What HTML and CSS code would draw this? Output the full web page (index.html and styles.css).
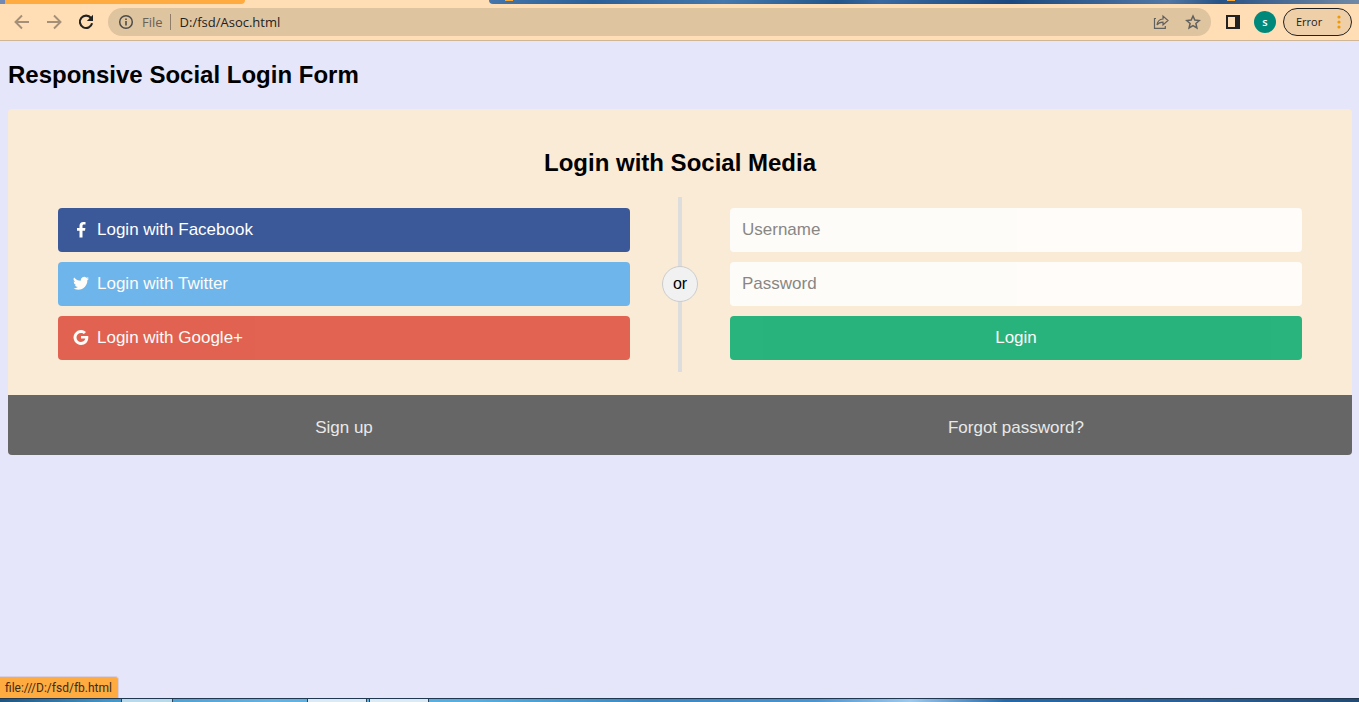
FILE: index.html
```html
<!DOCTYPE html>
<html lang="en">
<head>
<meta charset="utf-8">
<meta name="viewport" content="width=device-width, initial-scale=1">
<title>Responsive Social Login Form</title>
<link rel="stylesheet" href="styles.css">
</head>
<body>
<div class="tabstrip"><div class="tab-hover"></div><div class="tab-frame"><span class="favicon"></span><span class="favicon"></span></div></div>
<header class="toolbar">
  <button class="icon-btn dim" aria-label="Back"><svg width="16" height="16" viewBox="0 0 16 16"><path d="M15 8H2M8 1.500L1.500 8 8 14.500" fill="none" stroke="currentColor" stroke-width="1.900"/></svg></button>
  <button class="icon-btn dim" aria-label="Forward"><svg width="16" height="16" viewBox="0 0 16 16"><path d="M1 8h13M8 1.500L14.500 8 8 14.500" fill="none" stroke="currentColor" stroke-width="1.900"/></svg></button>
  <button class="icon-btn" aria-label="Reload"><svg width="16" height="16" viewBox="0 0 16 16"><path d="M13 4A6.200 6.200 0 1 0 14.100 9.300" fill="none" stroke="currentColor" stroke-width="2.100"/><path d="M15 .8V7H8.800z" fill="currentColor"/></svg></button>
  <div class="address">
    <svg width="16" height="16" viewBox="0 0 16 16"><circle cx="8" cy="8" r="6.300" fill="none" stroke="currentColor" stroke-width="1.500"/><path d="M7.200 7h1.600v4.500H7.200zM7.200 4.400h1.600V6H7.200z" fill="currentColor"/></svg>
    <span class="scheme">File</span>
    <span class="url">D:/fsd/Asoc.html</span>
    <button class="icon-btn share" aria-label="Share"><svg width="16" height="16" viewBox="0 0 16 16"><path d="M3 4.500H1.500v9.800h10.800V12M4 11C4.300 7.500 6.500 5.300 10 5V2l5 4.500-5 4.500V8.200C7 8.200 5.300 9 4 11z" fill="none" stroke="currentColor" stroke-width="1.200"/></svg></button>
    <button class="icon-btn" aria-label="Bookmark"><svg width="16" height="16" viewBox="0 0 16 16"><path d="M8 2l1.800 4.100 4.500.4-3.400 3 1 4.400L8 11.600l-3.900 2.300 1-4.400-3.400-3 4.500-.4z" fill="none" stroke="currentColor" stroke-width="1.500"/></svg></button>
  </div>
  <button class="icon-btn" aria-label="Side panel"><svg width="16" height="16" viewBox="0 0 16 16"><path d="M1 1h14v14H1zM3 3v10h7V3z" fill="#222" fill-rule="evenodd"/></svg></button>
  <button class="avatar" aria-label="Profile">s</button>
  <button class="error-btn">Error<svg width="4" height="14" viewBox="0 0 4 14" fill="#f29900"><circle cx="2" cy="2" r="1.600"/><circle cx="2" cy="7" r="1.600"/><circle cx="2" cy="12" r="1.600"/></svg></button>
</header>
<main class="page">
  <h2 class="title">Responsive Social Login Form</h2>
  <form class="container">
    <h2 class="title centered">Login with Social Media</h2>
    <div class="row">
      <div class="divider"><span class="divider-text">or</span></div>
      <div class="col">
        <a href="#" class="btn fb"><svg class="brand" viewBox="0 0 16 16"><path d="M12.500 0v2.600H11c-1.200 0-1.500.6-1.500 1.400v1.900h2.900l-.4 2.900H9.500V15.500h-3V8.800H4V5.900h2.500V3.800C6.500 1.300 8 0 10.300 0c1.100 0 2 0 2.200 0z"/></svg>Login with Facebook</a>
        <a href="#" class="btn twitter"><svg class="brand" viewBox="0 0 24 24"><path d="M23.950 3.570a10 10 0 0 1-2.820.77 4.960 4.960 0 0 0 2.160-2.720c-.95.560-2 .960-3.130 1.180a4.920 4.920 0 0 0-8.380 4.480C7.690 7.090 4.070 5.130 1.640 2.160a4.920 4.920 0 0 0 1.520 6.570 4.900 4.900 0 0 1-2.230-.61v.06a4.920 4.920 0 0 0 3.950 4.830 5 5 0 0 1-2.210.08 4.940 4.940 0 0 0 4.600 3.420A9.870 9.870 0 0 1 0 18.540a13.990 13.990 0 0 0 7.550 2.210c9.050 0 14-7.500 14-13.980 0-.21 0-.42-.02-.63a9.940 9.940 0 0 0 2.420-2.570z"/></svg>Login with Twitter</a>
        <a href="#" class="btn google"><svg class="brand" viewBox="0 0 16 16"><path d="M8 5.900h7.200c.1.500.1.900.1 1.500 0 4.400-3 7.500-7.300 7.500A7.400 7.400 0 1 1 13 2.100L10.900 4.100C10.400 3.600 9.400 3 8 3a4.500 4.500 0 0 0 0 9c2.900 0 4-1.900 4.200-3.400H8z"/></svg>Login with Google+</a>
      </div>
      <div class="col">
        <input class="field" type="text" placeholder="Username" aria-label="Username">
        <input class="field" type="password" placeholder="Password" aria-label="Password">
        <button class="btn submit" type="button">Login</button>
      </div>
    </div>
  </form>
  <nav class="bottom">
    <a href="#" class="btn plain">Sign up</a>
    <a href="#" class="btn plain">Forgot password?</a>
  </nav>
</main>
<div class="status">file:///D:/fsd/fb.html</div>
<footer class="taskbar"><i class="task first"></i><i class="task second"></i><i class="task third"></i></footer>
</body>
</html>
```
FILE: styles.css
```css
* { box-sizing: border-box; }
body {
  margin: 0;
  min-height: 100vh;
  display: flex;
  flex-direction: column;
  background: #e6e6fa;
  font: 17px/20px "Liberation Sans", Arial, sans-serif;
  color: #000;
}
button { font: inherit; border: 0; cursor: pointer; }
svg { flex: none; }

.tabstrip { display: flex; height: 4px; background: #ffdeb5; }
.tab-hover { width: 18%; border-left: 5px solid #7189b5; background: #ffab40; border-radius: 0 0 6px 0; }
.tab-frame {
  flex: 1;
  margin-left: 18%;
  display: flex;
  justify-content: space-between;
  padding: 0 124px 0 16px;
  border-radius: 0 0 0 6px;
  background: linear-gradient(90deg, #4575aa, #2c6098 12%, #4579ad 27%, #25568b 40%, #3969a0 45%, #1c4a80 60%, #5277a5 78%, #285386 84%, #7189a6);
}
.favicon { width: 8px; height: 1px; background: #f5a83c; }

.toolbar {
  display: flex;
  align-items: center;
  height: 37px;
  padding: 0 7px 0 14px;
  gap: 16px;
  background: #ffdeb5;
  border-bottom: 1px solid #cfb697;
  font: 12px/16px "Open Sans", "Noto Sans", sans-serif;
  color: #222;
}
.icon-btn { display: flex; padding: 0; background: none; color: #222; }
.dim { color: #a48f78; }
.address {
  flex: 1;
  display: flex;
  align-items: center;
  height: 28px;
  margin: 0 -2px;
  padding: 0 10px;
  border-radius: 14px;
  background: #dfc4a0;
  color: #4d4b49;
}
.address .icon-btn { color: #60605f; }
.scheme { margin-left: 8px; padding-right: 7px; border-right: 1px solid #8d7d69; color: #6a6156; font-size: 13px; }
.url { flex: 1; margin-left: 9px; color: #222; font-size: 13px; }
.share { margin-right: 16px; }
.avatar {
  width: 22px;
  height: 22px;
  margin-left: -3px;
  padding: 0;
  border-radius: 50%;
  background: #00897b;
  color: #fff;
  font-size: 11px;
  font-weight: 600;
  line-height: 20px;
}
.error-btn {
  display: flex;
  align-items: center;
  justify-content: space-between;
  width: 69px;
  height: 28px;
  margin-left: -9px;
  padding: 0 10px 0 12px;
  border: 1px solid #222;
  border-radius: 14px;
  background: #efcfa8;
  color: #222;
  font-size: 11px;
}

.page { flex: 1; padding: 0 7px 0 8px; }
.title { margin: 20px 0; font-size: 24px; line-height: 28px; }
.centered { margin: 0 0 20px; text-align: center; }
.container {
  padding: 40px 0 30px;
  border-radius: 4px 4px 0 0;
  background: #faebd7;
}
.row { position: relative; display: flex; }
.col { flex: 1; display: flex; flex-direction: column; gap: 10px; padding: 11px 50px 5px; }
.btn, .field {
  display: flex;
  align-items: center;
  width: 100%;
  height: 44px;
  padding: 12px;
  border: 0;
  border-radius: 4px;
  opacity: .85;
  color: #fff;
  font: inherit;
  text-decoration: none;
}
.field { background: #fff; color: #000; }
.field::placeholder { color: #757575; opacity: 1; }
.brand { width: 16px; height: 16px; margin: 0 8px 0 3px; fill: currentColor; }
.fb { background: #3b5998; opacity: 1; }
.twitter { background: #55acee; }
.google { background: #dd4b39; }
.submit { justify-content: center; background: #04aa6d; }
.divider {
  position: absolute;
  left: 50%;
  top: 0;
  display: flex;
  justify-content: center;
  width: 4px;
  height: 175px;
  padding-top: 69px;
  background: #ddd;
  transform: translateX(-50%);
}
.divider-text {
  flex: none;
  width: 36px;
  height: 36px;
  border: 1px solid #ccc;
  border-radius: 50%;
  background: #f1f1f1;
  font-size: 16px;
  line-height: 34px;
  text-align: center;
}
.bottom { display: flex; padding: 11px 0 5px; border-radius: 0 0 4px 4px; background: #666; }
.plain { justify-content: center; }

.status {
  position: fixed;
  left: 0;
  bottom: 4px;
  padding: 3px 6px 2px 5px;
  border: solid #d8cfe0;
  border-width: 1px 1px 0 0;
  border-radius: 0 4px 0 0;
  background: #ffab40;
  color: #3c2c18;
  font: 12px/16px Roboto, "Noto Sans", sans-serif;
}
.taskbar {
  display: flex;
  height: 4px;
  border-top: 1px solid #20384f;
  background: linear-gradient(90deg, #1d5480, #4397c8 8%, #63b2df 20%, #55aede 35%, #3a87c2 48%, #4a94cf 60%, #9dc9ee 67%, #2468a9 74%, #2a5f96 88%, #214a75);
}
.task { width: 60px; border: solid #28445c; border-width: 0 1px; background: #dcebf3; }
.first { margin-left: 121px; width: 52px; background: #b9dbe9; }
.second { margin-left: 134px; }
.third { margin-left: 2px; }
```
